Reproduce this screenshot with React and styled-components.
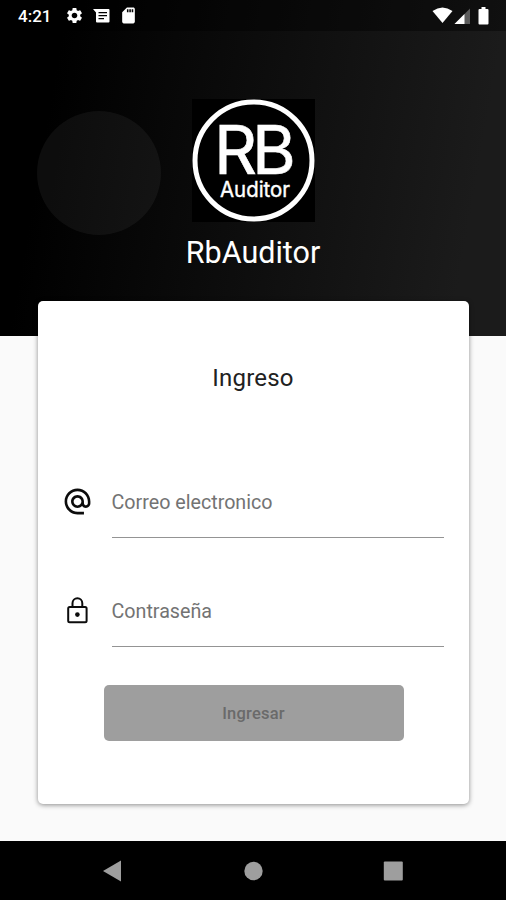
import React, {useState} from 'react'
import styled, {createGlobalStyle} from 'styled-components'
import {MdSettings, MdSdCard, MdAlternateEmail} from 'react-icons/md'

const App = () => {
    const [correo, changeCorreo] = useState('');
    const [password, changePassword] = useState('');

    const handleSubmit = (e) => {
        e.preventDefault();
    }

    return (
        <>
        <GlobalStyle/>
        <Screen>
            <Header>
                <StatusBar>
                    <Clock>4:21</Clock>
                    <StatusIcons>
                        <MdSettings size={19}/>
                        <MessageIcon/>
                        <MdSdCard size={19}/>
                    </StatusIcons>
                    <SignalIcons/>
                </StatusBar>
                <Bubble/>
                <Logo/>
                <AppName>RbAuditor</AppName>
            </Header>

            <Card onSubmit={handleSubmit}>
                <CardTitle>Ingreso</CardTitle>
                <Field>
                    <MdAlternateEmail size={31}/>
                    <Input type='email' name='correo' placeholder='Correo electronico'
                    value={correo} onChange={(e) => changeCorreo(e.target.value)}/>
                </Field>
                <Field>
                    <LockIcon/>
                    <Input type='password' name='password' placeholder='Contraseña'
                    value={password} onChange={(e) => changePassword(e.target.value)}/>
                </Field>
                <Button type='submit' disabled={correo === '' || password === ''}>Ingresar</Button>
            </Card>

            <NavBar>
                <svg width='20' height='22' viewBox='0 0 20 22'><path d='M0 11 18 0.500v21z' fill='#9e9e9e'/></svg>
                <svg width='20' height='22' viewBox='0 0 20 22'><circle cx='10.500' cy='11' r='9.200' fill='#9e9e9e'/></svg>
                <svg width='20' height='22' viewBox='0 0 20 22'><rect x='0.800' y='1.500' width='19' height='19' rx='1' fill='#9e9e9e'/></svg>
            </NavBar>
        </Screen>
        </>
    );
}

export default App;

const MessageIcon = () => (
    <svg width='17' height='16' viewBox='0 0 17 16'>
        <path fillRule='evenodd' fill='#fff' d='M0 1h15.500q1 0 1 1v11.500q0 1-1 1H4q-1 0-1-1V4.500zM5.500 4v1.200h8.500V4zM5.500 7v1.200h8.500V7zM5.500 10v1.200h5.500V10z'/>
    </svg>
)

const SignalIcons = () => (
    <svg width='58' height='20' viewBox='0 0 58 20'>
        <path d='M0.500 5Q10.500-2 20.500 5L10.500 17z' fill='#fff'/>
        <path d='M38 2.500V18H22.500z' fill='#5c5c5c'/>
        <path d='M32.500 8V18H22.500z' fill='#fff'/>
        <path d='M49.500 1h4v2h2q1 0 1 1v13.500q0 1-1 1h-8q-1 0-1-1V4q0-1 1-1h2z' fill='#fff'/>
    </svg>
)

const LockIcon = () => (
    <svg width='31' height='31' viewBox='0 0 31 31' fill='none' stroke='currentColor' strokeWidth='2'>
        <rect x='6.200' y='12' width='18.400' height='15.300' rx='1.500'/>
        <path d='M10.500 12V8.200a4.900 4.900 0 0 1 9.800 0V12'/>
        <circle cx='15.400' cy='19.600' r='2.300' fill='currentColor' stroke='none'/>
    </svg>
)

const Logo = () => (
    <LogoBox viewBox='0 0 123 123'>
        <rect width='123' height='123' fill='#000'/>
        <circle cx='61.500' cy='61.500' r='58.500' fill='none' stroke='#fff' strokeWidth='5'/>
        <LogoInitials x='22' y='75'>RB</LogoInitials>
        <LogoWord x='28' y='97.500' textLength='70' lengthAdjust='spacingAndGlyphs'>Auditor</LogoWord>
    </LogoBox>
)

const GlobalStyle = createGlobalStyle`
    *{
        box-sizing: border-box;
    }

    body{
        margin: 0;
        font-family: Roboto, sans-serif;
        background-color: #fafafa;
    }
`;

const Screen = styled.div`
    width: 506px;
    height: 900px;
    display: flex;
    flex-direction: column;
    align-items: center;
    overflow: hidden;
    background-color: #fafafa;
`;

const Header = styled.header`
    position: relative;
    flex: none;
    width: 100%;
    height: 336px;
    display: flex;
    flex-direction: column;
    align-items: center;
    color: white;
    background: linear-gradient(100deg, #000 12%, #1b1b1b 90%);
`;

const StatusBar = styled.div`
    width: 100%;
    height: 31px;
    padding: 0 16px 0 18px;
    display: flex;
    align-items: center;
    background-color: rgba(0, 0, 0, 0.4);
`;

const Clock = styled.span`
    width: 47px;
    font-size: 17px;
    font-weight: 500;
`;

const StatusIcons = styled.div`
    flex: 1;
    display: flex;
    align-items: center;
    gap: 9px;
`;

const Bubble = styled.div`
    position: absolute;
    top: 111px;
    left: 37px;
    width: 124px;
    height: 124px;
    border-radius: 50%;
    background-color: rgba(255, 255, 255, 0.05);
`;

const LogoBox = styled.svg`
    width: 123px;
    height: 123px;
    margin-top: 68px;
    fill: white;
    font-family: Inter, sans-serif;
`;

const LogoInitials = styled.text`
    font-size: 67px;
    letter-spacing: -5px;
    stroke: white;
    stroke-width: 0.6px;
`;

const LogoWord = styled.text`
    font-size: 21.5px;
    stroke: white;
    stroke-width: 0.4px;
`;

const AppName = styled.h1`
    margin: 12px 0 0;
    font-size: 30.5px;
    font-weight: 400;
    line-height: 38px;
`;

const Card = styled.form`
    position: relative;
    flex: none;
    width: 431px;
    height: 503px;
    margin-top: -35px;
    padding: 61px 25px 0;
    display: flex;
    flex-direction: column;
    align-items: center;
    border-radius: 5px;
    background-color: white;
    box-shadow: 0 1px 5px rgba(0, 0, 0, 0.45);
`;

const CardTitle = styled.h2`
    margin: 0 0 87px;
    font-size: 24px;
    font-weight: 400;
    line-height: 32px;
    letter-spacing: 0.2px;
    color: #212121;
`;

const Field = styled.label`
    width: 100%;
    height: 57px;
    margin-bottom: 52px;
    display: flex;
    gap: 19px;

    svg{
        flex: none;
        margin: 5px 0 0 -1px;
        color: #0c0c0c;
    }
`;

const Input = styled.input`
    flex: 1;
    min-width: 0;
    padding: 1px 0 15px;
    border: none;
    border-bottom: 1px solid #949494;
    border-radius: 0;
    outline: none;
    background: transparent;
    font-family: inherit;
    font-size: 19.7px;

    &::placeholder{
        color: #737373;
        opacity: 1;
    }
`;

const Button = styled.button`
    width: 300px;
    height: 56px;
    margin: -14px 0 0 1px;
    padding-top: 2px;
    border: none;
    border-radius: 5px;
    font-family: inherit;
    font-size: 16.5px;
    font-weight: 500;
    letter-spacing: 0.2px;
    color: #fff;
    background-color: #000;

    &:disabled{
        color: #6a6a6a;
        background-color: #9e9e9e;
    }
`;

const NavBar = styled.nav`
    width: 100%;
    height: 59px;
    margin-top: auto;
    padding: 0 103px;
    display: flex;
    align-items: center;
    justify-content: space-between;
    background-color: #000;
`;
